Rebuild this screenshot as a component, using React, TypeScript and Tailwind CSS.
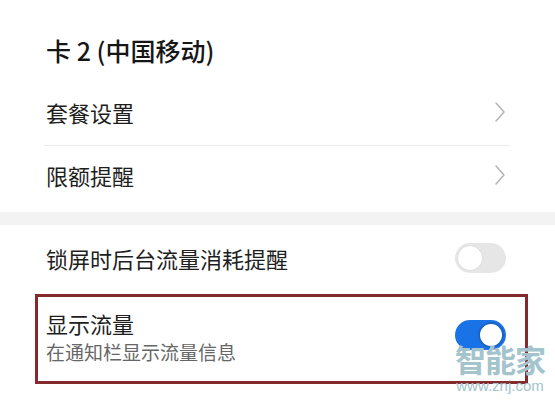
const font = { fontFamily: '"Noto Sans CJK SC", "Noto Sans", sans-serif' };

const Chevron = () => (
  <svg width="12" height="22" viewBox="0 0 12 22" fill="none">
    <path d="M2 2 L10 11 L2 20" stroke="#b4b4b4" strokeWidth="1.5" strokeLinecap="round" strokeLinejoin="round" />
  </svg>
);

const Toggle = ({ on }: { on: boolean }) =>
  on ? (
    <div className="w-[51px] h-[30px] rounded-full bg-[#1a73e6] flex items-center justify-end pr-[2px]">
      <div className="w-[26px] h-[26px] rounded-full bg-white border-2 border-[#1a63c6]" />
    </div>
  ) : (
    <div className="w-[51px] h-[30px] rounded-full bg-[#e6e6e6] flex items-center pl-[2px]">
      <div className="w-[26px] h-[26px] rounded-full bg-white border border-[#dddddd]" />
    </div>
  );

export default function App() {
  return (
    <div className="relative w-[555px] h-[400px] bg-white overflow-hidden text-[#1e1e1e]" style={font}>
      <div className="pl-[46px] pt-[33px] pb-[16px]">
        <h1 className="text-[25px] leading-[34px] font-medium text-[#161616]">卡 2 (中国移动)</h1>
      </div>

      <div className="h-[62px] pb-[5px] flex items-center justify-between pl-[46px] pr-[49px]">
        <span className="text-[22px] leading-[30px]">套餐设置</span>
        <Chevron />
      </div>
      <div className="h-px bg-[#ececec] ml-[44px] mr-[45px]" />
      <div className="h-[66px] pb-[9px] flex items-center justify-between pl-[46px] pr-[49px]">
        <span className="text-[22px] leading-[30px]">限额提醒</span>
        <Chevron />
      </div>

      <div className="h-[13px] bg-[#f3f3f3]" />

      <div className="h-[69px] pb-[3px] flex items-center justify-between pl-[46px] pr-[49px]">
        <span className="text-[22px] leading-[30px]">锁屏时后台流量消耗提醒</span>
        <Toggle on={false} />
      </div>

      <div className="ml-[35px] mr-[27px] h-[90px] border-[3px] border-[#852a2c] flex items-center justify-between pl-[8px] pr-[19px]">
        <div className="flex flex-col gap-[2px] pb-[5px]">
          <span className="text-[22px] leading-[28px]">显示流量</span>
          <span className="text-[19px] leading-[26px] text-[#666666]">在通知栏显示流量信息</span>
        </div>
        <div className="pb-[8px]">
          <Toggle on={true} />
        </div>
      </div>

      <div className="absolute left-[455px] top-[342px] flex flex-col items-center text-[#a3c4cc]">
        <span className="text-[31px] leading-[34px] font-bold tracking-[-1px]">智能家</span>
        <span className="text-[15px] leading-[17px] mt-[1px]" style={{ fontFamily: '"Liberation Sans", sans-serif' }}>www.znj.com</span>
      </div>
    </div>
  );
}
